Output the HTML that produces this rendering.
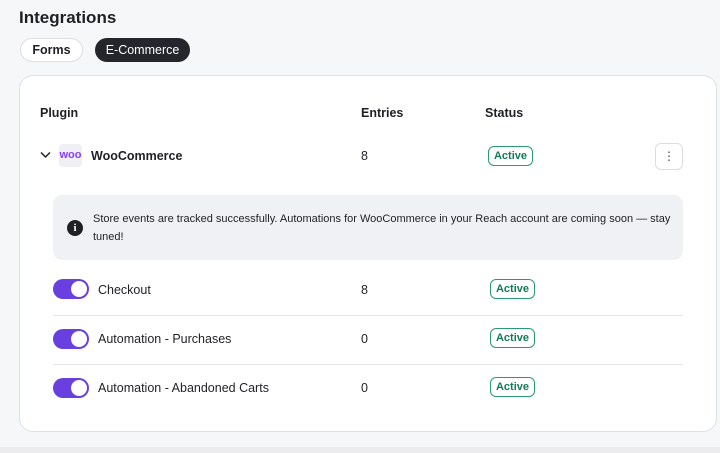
<!DOCTYPE html><html><head><style>
body{margin:0;width:720px;height:453px;background:#f6f7f9;font-family:"Liberation Sans",sans-serif;color:#1f2024;position:relative;overflow:hidden}
.a{position:absolute}
.b{font-weight:bold}
.pill{border-radius:14px;font-size:12.5px;font-weight:bold;text-align:center;line-height:22px}
.act{box-sizing:border-box;border:1.5px solid #2a9a74;color:#137a55;border-radius:6px;font-size:11px;font-weight:bold;width:45px;height:20px;display:flex;align-items:center;justify-content:center}
.tog{width:36px;height:20px;border-radius:10px;background:#6a3fe0}
.tog:after{content:"";position:absolute;right:2px;top:2px;width:16px;height:16px;border-radius:50%;background:#fff}
.t{font-size:12.5px}
.hr{height:1px;background:#e3e4e8;left:53px;width:630px}
</style></head><body>
<div class="a b" style="left:19px;top:8px;font-size:17px">Integrations</div>
<div class="a pill" style="left:20px;top:38px;width:61px;height:22px;border:1px solid #dcdde1;background:#fff">Forms</div>
<div class="a pill" style="left:95px;top:38px;width:95px;height:24px;background:#25262c;color:#fff;line-height:24px;font-weight:normal">E-Commerce</div>
<div class="a" style="left:19px;top:75px;width:696px;height:355px;background:#fff;border:1px solid #dfe0e4;border-radius:14px"></div>
<div class="a b t" style="left:40px;top:106px">Plugin</div>
<div class="a b t" style="left:361px;top:106px">Entries</div>
<div class="a b t" style="left:485px;top:106px">Status</div>
<svg class="a" style="left:40px;top:151px" width="11" height="8"><path d="M1 1.5l4.5 4.5 4.5-4.5" stroke="#222" stroke-width="1.5" fill="none"/></svg>
<div class="a" style="left:59px;top:144px;width:23px;height:23px;background:#f0f0f4;border-radius:4px;color:#873eff;font-weight:bold;font-size:11px;line-height:22px;text-align:center">woo</div>
<div class="a b t" style="left:91px;top:149px">WooCommerce</div>
<div class="a t" style="left:361px;top:149px">8</div>
<div class="a act" style="left:488px;top:146px">Active</div>
<div class="a" style="left:655px;top:143px;width:26px;height:25px;border:1px solid #dcdde1;border-radius:6px;text-align:center;font-size:12px;line-height:24px;color:#444">⋮</div>
<div class="a" style="left:53px;top:195px;width:630px;height:65px;background:#f0f1f5;border-radius:9px"></div>
<div class="a" style="left:67px;top:220px;width:16px;height:16px;border-radius:50%;background:#1f2024;color:#fff;font-size:11px;font-weight:bold;text-align:center;line-height:16px;font-family:'Liberation Serif',serif">i</div>
<div class="a" style="left:93px;top:210px;white-space:nowrap;font-size:11px;line-height:18px">Store events are tracked successfully. Automations for WooCommerce in your Reach account are coming soon — stay<br>tuned!</div>
<div class="a tog" style="left:53px;top:279px"></div>
<div class="a t" style="left:98px;top:283px">Checkout</div>
<div class="a t" style="left:361px;top:283px">8</div>
<div class="a act" style="left:490px;top:279px">Active</div>
<div class="a hr" style="top:315px"></div>
<div class="a tog" style="left:53px;top:329px"></div>
<div class="a t" style="left:98px;top:332px">Automation - Purchases</div>
<div class="a t" style="left:361px;top:332px">0</div>
<div class="a act" style="left:490px;top:328px">Active</div>
<div class="a hr" style="top:364px"></div>
<div class="a tog" style="left:53px;top:378px"></div>
<div class="a t" style="left:98px;top:381px">Automation - Abandoned Carts</div>
<div class="a t" style="left:361px;top:381px">0</div>
<div class="a act" style="left:490px;top:377px">Active</div>
<div class="a" style="left:0;top:447px;width:720px;height:6px;background:#ececef"></div>
</body></html>
